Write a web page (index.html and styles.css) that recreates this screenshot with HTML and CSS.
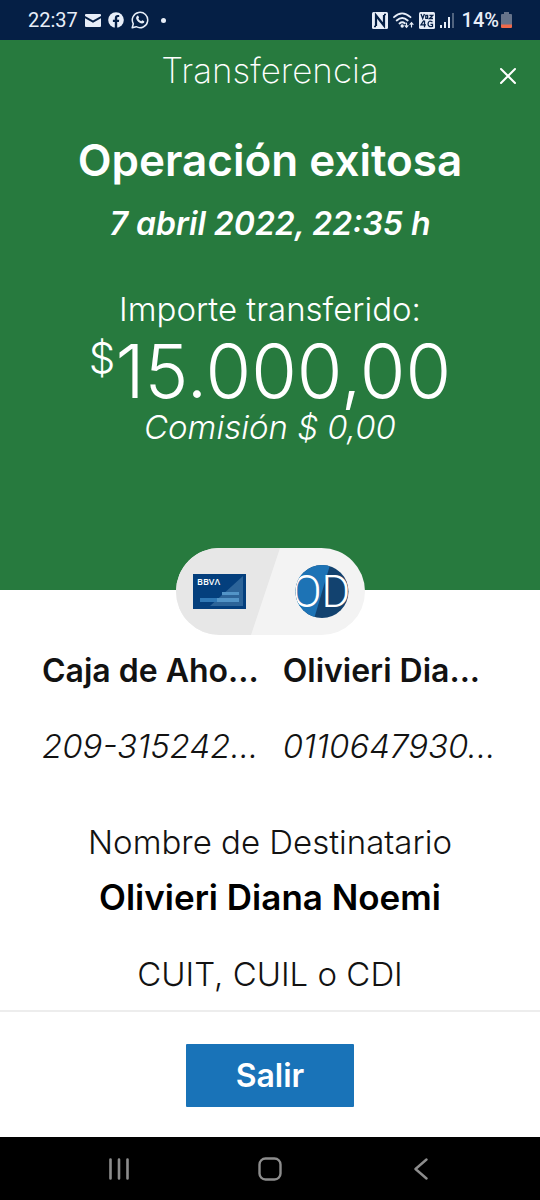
FILE: index.html
```html
<!DOCTYPE html>
<html lang="es">
<head>
<meta charset="utf-8">
<meta name="viewport" content="width=device-width, initial-scale=1">
<title>Transferencia</title>
<link rel="stylesheet" href="styles.css">
</head>
<body>
<div class="status">
  <div class="status-group">
    <span class="clock">22:37</span>
    <svg width="16" height="13" viewBox="0 0 16 13" fill="#e8eef8"><path d="M1 0h14q1 0 1 1v1L8 6.500 0 2V1q0-1 1-1z"/><path d="M0 4.300l8 4.400 8-4.400V12q0 1-1 1H1q-1 0-1-1z"/></svg>
    <svg width="16" height="16" viewBox="0 0 16 16"><circle cx="8" cy="8" r="7.800" fill="#e8eef8"/><path d="M6.800 16V10H4.900V7.700h1.900V6.200c0-2 1.200-3.100 2.900-3.100.7 0 1.500.1 1.500.1v1.900h-.9c-.9 0-1.100.5-1.100 1.100v1.500h2L10.900 10H9.200v6z" fill="#051f45"/></svg>
    <svg width="18" height="18" viewBox="0 0 18 18"><path d="M1.200 16.800l1.100-4A7.700 7.700 0 1 1 5.200 15.700z" fill="none" stroke="#e8eef8" stroke-width="1.500" stroke-linejoin="round"/><path d="M6.100 4.900c.5-.6 1.100-.4 1.300.1l.6 1.400c.1.300-.6 1.100-.6 1.300.6 1.200 1.600 2 2.800 2.500.3.100.8-1 1.200-.9l1.700.9c.5.300.1 1.400-.5 1.800-1.200.8-2.700.4-4.300-.5-1.500-.9-2.700-2.400-3.100-3.800-.3-1.200.2-2.200.9-2.800z" fill="#e8eef8"/></svg>
    <span class="dot"></span>
  </div>
  <div class="status-group status-right">
    <svg width="16" height="17" viewBox="0 0 16 17"><rect width="16" height="17" rx="1.500" fill="#e8eef8"/><path d="M4 14V3.500L12 13.500V3" fill="none" stroke="#051f45" stroke-width="2.200"/><path d="M2 14.500h2M12 2.500h2" stroke="#051f45" stroke-width="1.500"/></svg>
    <svg width="21" height="17" viewBox="0 0 21 17" fill="none" stroke="#e8eef8" stroke-width="1.800" stroke-linecap="round"><path d="M1 5.200Q9 -2.500 17.500 5.200M3.700 8.500q5.500-5 11 0M6.500 11.500q2.700-2.300 5.300-.2"/><circle cx="9.200" cy="14" r=".8" fill="#e8eef8"/><path d="M13.500 11v4M12 13.700l1.500 1.600 1.500-1.600M18.500 15v-4M17 12.300l1.500-1.600 1.500 1.600" stroke-width="1.200"/></svg>
    <svg width="16" height="17" viewBox="0 0 16 17"><rect width="16" height="17" rx="1.500" fill="#e8eef8"/><path d="M2 2l1.700 4.500L5.400 2M10.500 3.300h3.200L10.600 6.500h3.400M6.800 3.300h1.800v3H6.800zM4.800 8.500L2 12.800h5M5.500 8.500v6.800M13.500 10q-4-2.500-4.500 2 .3 3.600 4.500 2.300v-2h-2" fill="none" stroke="#051f45" stroke-width="1.300"/></svg>
    <svg width="14" height="16" viewBox="0 0 14 16" stroke-width="2"><path d="M1 13v3M5 10v6M9 5v11" stroke="#e8eef8"/><path d="M13 1v15" stroke="#51647f"/></svg>
    <div class="battery">
      <span class="clock battery-text">14%</span>
      <svg width="11" height="16" viewBox="0 0 11 16"><path d="M3 0h5v2h2q1 0 1 1v10H0V3q0-1 1-1h2z" fill="#66738a"/><path d="M0 12.500h11V15q0 1-1 1H1q-1 0-1-1z" fill="#f0694a"/></svg>
    </div>
  </div>
</div>

<header class="hero">
  <div class="titlebar">
    <h1 class="title">Transferencia</h1>
    <button class="close" type="button" aria-label="Cerrar">
      <svg width="18" height="18" viewBox="0 0 18 18" fill="none" stroke="#fff" stroke-width="2" stroke-linecap="round"><path d="M2 2l14 14M16 2L2 16"/></svg>
    </button>
  </div>
  <h2 class="result">Operación exitosa</h2>
  <p class="date">7 abril 2022, 22:35 h</p>
  <p class="label">Importe transferido:</p>
  <p class="amount"><span class="currency">$</span><span>15.000,00</span></p>
  <p class="fee">Comisión $ 0,00</p>
</header>

<main class="details">
  <svg class="pill" width="189" height="87" viewBox="0 0 189 87">
    <defs>
      <clipPath id="pill-shape"><rect width="189" height="87" rx="43.500"/></clipPath>
      <clipPath id="avatar-shape"><circle cx="146" cy="43.500" r="26.500"/></clipPath>
    </defs>
    <g clip-path="url(#pill-shape)">
      <path d="M0 0h189v87H0z" fill="#f3f3f3"/>
      <path d="M0 0h104L75 87H0z" fill="#e7e7e7"/>
    </g>
    <path d="M17 26h53v35H17z" fill="#043f7d"/>
    <path d="M67 28v30H34z" fill="#2c6499"/>
    <path d="M46 44h17v3H46zM24 50h39v4H24z" fill="#2f78b6"/>
    <path d="M46 44h17v3H46zM41 50h22v4H41z" fill="#5294c7"/>
    <text class="card-brand" x="21" y="37">BBVΛ</text>
    <g clip-path="url(#avatar-shape)">
      <path d="M119 17h54v54h-54z" fill="#12426f"/>
      <path d="M119 17h35l-16 54h-19z" fill="#1d73b5"/>
      <text class="initials" x="145" y="59">OD</text>
    </g>
  </svg>

  <div class="accounts">
    <div class="account">
      <h3 class="account-name">Caja de Aho...</h3>
      <p class="account-number">209-315242...</p>
    </div>
    <div class="account">
      <h3 class="account-name">Olivieri Dia...</h3>
      <p class="account-number">0110647930...</p>
    </div>
  </div>

  <dl class="recipient">
    <dt>Nombre de Destinatario</dt>
    <dd>Olivieri Diana Noemi</dd>
    <dt>CUIT, CUIL o CDI</dt>
  </dl>
</main>

<footer class="actions">
  <button class="exit" type="button">Salir</button>
</footer>

<nav class="system-nav">
  <button type="button" aria-label="Recientes"><svg width="22" height="22" viewBox="0 0 22 22" stroke="#8d8d8d" stroke-width="2.600" stroke-linecap="round"><path d="M2.500 1.500v19M11 1.500v19M19.500 1.500v19"/></svg></button>
  <button type="button" aria-label="Inicio"><svg width="24" height="24" viewBox="0 0 24 24" fill="none" stroke="#8d8d8d" stroke-width="2.400"><rect x="1.500" y="1.500" width="21" height="21" rx="6"/></svg></button>
  <button type="button" aria-label="Atrás"><svg width="14" height="22" viewBox="0 0 14 22" fill="none" stroke="#8d8d8d" stroke-width="2.400" stroke-linecap="round" stroke-linejoin="round"><path d="M12.500 1.500L1.500 11l11 9.500"/></svg></button>
</nav>
</body>
</html>
```
FILE: styles.css
```css
* {
  box-sizing: border-box;
}

body {
  display: flex;
  flex-direction: column;
  min-height: 100vh;
  margin: 0;
  background: #fff;
  color: #121212;
  font-family: Inter, "Open Sans", "Liberation Sans", sans-serif;
}

h1, h2, h3, p, dl, dd {
  margin: 0;
}

button {
  padding: 0;
  border: 0;
  background: none;
  font: inherit;
  cursor: pointer;
}

svg {
  display: block;
  flex: none;
}

.status {
  display: flex;
  justify-content: space-between;
  align-items: center;
  height: 40px;
  padding: 0 28px;
  background: #051f45;
  color: #e8eef8;
}

.status-group {
  display: flex;
  align-items: center;
  gap: 7px;
}

.status-right {
  gap: 5px;
}

.clock {
  font: 400 20px/24px Roboto, sans-serif;
}

.battery {
  display: flex;
  align-items: center;
  gap: 2px;
  padding-left: 3px;
}

.battery-text {
  font-weight: 500;
}

.dot {
  width: 5px;
  height: 5px;
  margin-left: 5px;
  border-radius: 50%;
  background: #e8eef8;
}

.hero {
  padding-bottom: 145px;
  background: #277a3e;
  color: #fff;
  text-align: center;
}

.titlebar {
  display: grid;
  grid-template-columns: 48px 1fr 48px;
  align-items: center;
  padding: 6px 8px 0;
}

.title {
  grid-column: 2;
  font-size: 35px;
  font-weight: 200;
  line-height: 48px;
}

.close {
  display: grid;
  place-items: center;
  height: 48px;
  padding-top: 12px;
}

.result {
  margin-top: 42px;
  font-size: 44px;
  font-weight: 600;
  line-height: 48px;
}

.date {
  margin-top: 20px;
  font-size: 32px;
  font-style: italic;
  font-weight: 600;
  line-height: 40px;
}

.label {
  margin-top: 45px;
  font-size: 33px;
  font-weight: 300;
  line-height: 40px;
}

.amount {
  display: flex;
  justify-content: center;
  align-items: flex-start;
  margin-top: 4px;
  font-size: 74px;
  font-weight: 300;
  line-height: 76px;
}

.currency {
  font-size: 42px;
  line-height: 50px;
}

.fee {
  font-size: 33px;
  font-style: italic;
  font-weight: 300;
  line-height: 36px;
}

.details {
  flex: 1;
  padding-bottom: 16px;
}

.pill {
  position: relative;
  margin: -42px auto 0;
}

.card-brand {
  fill: #fff;
  font: 600 9px "Open Sans", sans-serif;
}

.initials {
  fill: #fff;
  font: 300 44px Roboto, sans-serif;
  text-anchor: middle;
}

.accounts {
  display: grid;
  grid-template-columns: 1fr 1fr;
  gap: 24px;
  padding: 16px 42px 0;
  white-space: nowrap;
}

.account-name {
  font-size: 32px;
  font-weight: 600;
  line-height: 40px;
}

.account-number {
  margin-top: 35px;
  font-size: 33px;
  font-style: italic;
  font-weight: 300;
  line-height: 40px;
}

.recipient {
  padding-top: 56px;
  font-size: 33px;
  font-weight: 300;
  line-height: 40px;
  text-align: center;
}

.recipient dd {
  margin: 15px 0 37px;
  color: #000;
  font-size: 35px;
  font-weight: 600;
}

.actions {
  display: flex;
  justify-content: center;
  padding: 32px 24px 30px;
  border-top: 2px solid #ededed;
}

.exit {
  width: 168px;
  height: 63px;
  border-radius: 1px;
  background: #1973b8;
  color: #fff;
  font-size: 32px;
  font-weight: 600;
}

.system-nav {
  display: grid;
  grid-template-columns: repeat(3, 1fr);
  height: 63px;
  padding: 0 43px;
  background: #000;
}

.system-nav button {
  display: grid;
  place-items: center;
}
```
